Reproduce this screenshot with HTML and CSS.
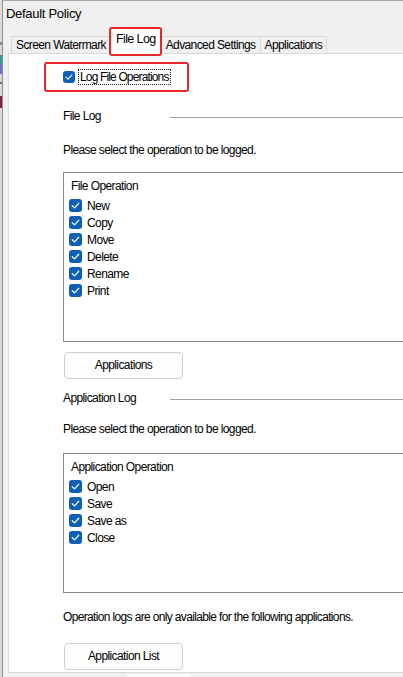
FILE: index.html
```html
<!DOCTYPE html>
<html>
<head>
<meta charset="utf-8">
<title>Default Policy</title>
<link rel="stylesheet" href="styles.css">
</head>
<body>
<div class="screen">
  <div class="behind"></div>
  <div class="window">
    <div class="title">Default Policy</div>
    <div class="tabs">
      <div class="tab">Screen Watermark</div>
      <div class="tab selected">File Log</div>
      <div class="tab">Advanced Settings</div>
      <div class="tab">Applications</div>
    </div>
    <div class="panel">
      <div class="checkrow highlighted">
        <span class="box small"><svg viewBox="0 0 12 12"><path d="M3 6.2 L5.1 8.2 L9 3.9" /></svg></span>
        <span class="focus">Log File Operations</span>
      </div>

      <div class="group g1">
        <span class="group-label">File Log</span>
        <span class="group-line"></span>
      </div>
      <div class="text t1">Please select the operation to be logged.</div>

      <div class="listbox lb1">
        <div class="lb-head">File Operation</div>
        <div class="item"><span class="box"><svg viewBox="0 0 12 12"><path d="M3 6.2 L5.1 8.2 L9 3.9" /></svg></span>New</div>
        <div class="item"><span class="box"><svg viewBox="0 0 12 12"><path d="M3 6.2 L5.1 8.2 L9 3.9" /></svg></span>Copy</div>
        <div class="item"><span class="box"><svg viewBox="0 0 12 12"><path d="M3 6.2 L5.1 8.2 L9 3.9" /></svg></span>Move</div>
        <div class="item"><span class="box"><svg viewBox="0 0 12 12"><path d="M3 6.2 L5.1 8.2 L9 3.9" /></svg></span>Delete</div>
        <div class="item"><span class="box"><svg viewBox="0 0 12 12"><path d="M3 6.2 L5.1 8.2 L9 3.9" /></svg></span>Rename</div>
        <div class="item"><span class="box"><svg viewBox="0 0 12 12"><path d="M3 6.2 L5.1 8.2 L9 3.9" /></svg></span>Print</div>
      </div>

      <div class="button b1">Applications</div>

      <div class="group g2">
        <span class="group-label">Application Log</span>
        <span class="group-line"></span>
      </div>
      <div class="text t2">Please select the operation to be logged.</div>

      <div class="listbox lb2">
        <div class="lb-head">Application Operation</div>
        <div class="item"><span class="box"><svg viewBox="0 0 12 12"><path d="M3 6.2 L5.1 8.2 L9 3.9" /></svg></span>Open</div>
        <div class="item"><span class="box"><svg viewBox="0 0 12 12"><path d="M3 6.2 L5.1 8.2 L9 3.9" /></svg></span>Save</div>
        <div class="item"><span class="box"><svg viewBox="0 0 12 12"><path d="M3 6.2 L5.1 8.2 L9 3.9" /></svg></span>Save as</div>
        <div class="item"><span class="box"><svg viewBox="0 0 12 12"><path d="M3 6.2 L5.1 8.2 L9 3.9" /></svg></span>Close</div>
      </div>

      <div class="text t3">Operation logs are only available for the following applications.</div>

      <div class="button b2">Application List</div>
    </div>
    <div class="peek"></div>
  </div>
</div>
</body>
</html>
```

FILE: styles.css
```css
html, body {
  margin: 0;
  padding: 0;
}
body {
  width: 403px;
  height: 677px;
  overflow: hidden;
  background: #f0f0f0;
  font-family: "Liberation Sans", Arial, sans-serif;
  font-size: 12px;
  letter-spacing: -0.6px;
  color: #000;
}
.screen {
  display: flex;
  width: 403px;
  height: 677px;
  overflow: hidden;
}
.behind {
  flex: 0 0 2px;
  background: linear-gradient(to bottom,
    #dcdcdc 0, #dcdcdc 42px,
    #8c8c8c 42px, #8c8c8c 45px,
    #d8d8d8 45px, #d8d8d8 55px,
    #2f9c9c 55px, #2f9c9c 64px,
    #6b73c9 64px, #6b73c9 74px,
    #d8d8d8 74px, #d8d8d8 82px,
    #707070 82px, #707070 84px,
    #d8d8d8 84px, #d8d8d8 96px,
    #8a1c3c 96px, #8a1c3c 108px,
    #d8d8d8 108px, #d8d8d8 100%);
}
.window {
  flex: 1 1 auto;
  min-width: 0;
  border-left: 1px solid #8f8f8f;
  border-top: 1px solid #a8a8a8;
  display: flex;
  flex-direction: column;
}
.title {
  height: 27px;
  line-height: 26px;
  padding-left: 3px;
  font-size: 13px;
  letter-spacing: -0.3px;
}
.tabs {
  display: flex;
  align-items: flex-end;
  height: 25px;
  padding-left: 8px;
  position: relative;
  z-index: 2;
}
.tab {
  height: 16px;
  line-height: 16px;
  padding: 0 4px;
  background: #f0f0f0;
  border: 1px solid #d9d9d9;
  border-bottom: none;
  white-space: nowrap;
}
.tab + .tab {
  margin-left: -1px;
}
.tab.selected {
  position: relative;
  height: 26px;
  line-height: 22px;
  margin-bottom: -1px;
  background: #fff;
  padding: 0 5px;
  font-size: 12.5px;
}
.tab.selected::after {
  content: "";
  position: absolute;
  left: -2px;
  right: -1px;
  top: -1px;
  bottom: -2px;
  border: 2px solid #e5262b;
  border-radius: 3px;
}
.panel {
  margin-left: 5px;
  background: #fff;
  border: 1px solid #d9d9d9;
  border-right: none;
  padding: 0 0 2px 54px;
  display: flex;
  flex-direction: column;
  align-items: flex-start;
  position: relative;
  z-index: 1;
}
.checkrow {
  display: inline-flex;
  align-items: center;
  height: 16px;
  margin-top: 15px;
  position: relative;
}
.checkrow.highlighted::after {
  content: "";
  position: absolute;
  left: -19px;
  right: -18px;
  top: -7px;
  bottom: -7px;
  border: 2px solid #e5262b;
  border-radius: 3px;
}
.box {
  flex: 0 0 13px;
  width: 13px;
  height: 13px;
  border-radius: 3px;
  background: #0e5fb8;
  display: inline-flex;
}
.box.small {
  flex-basis: 12px;
  width: 12px;
  height: 12px;
}
.box svg {
  width: 100%;
  height: 100%;
}
.box path {
  fill: none;
  stroke: #fff;
  stroke-width: 1.1;
  stroke-linecap: round;
  stroke-linejoin: round;
}
.focus {
  margin-left: 3px;
  padding: 0 1px;
  line-height: 14px;
  border: 1px dotted #222;
  letter-spacing: -0.85px;
}
.group {
  display: flex;
  align-items: center;
  align-self: stretch;
  height: 16px;
}
.g1 { margin-top: 23px; }
.g2 { margin-top: 11px; }
.group-label {
  flex: 0 0 107px;
  line-height: 16px;
}
.group-line {
  flex: 1 1 auto;
  height: 1px;
  background: #a0a0a0;
  margin-top: 2px;
}
.text {
  line-height: 16px;
  white-space: nowrap;
}
.t1 { margin-top: 18px; }
.t2 { margin-top: 15px; }
.t3 { margin-top: 16px; letter-spacing: -0.65px; }
.listbox {
  align-self: stretch;
  box-sizing: border-box;
  border: 1px solid #8a8a96;
  border-right: none;
  padding: 5px 0 0 5px;
}
.lb1 { margin-top: 14px; height: 170px; }
.lb2 { margin-top: 16px; height: 140px; }
.lb-head {
  line-height: 16px;
  padding-left: 2px;
  margin-bottom: 3px;
}
.item {
  display: flex;
  align-items: center;
  gap: 5px;
  height: 17px;
}
.button {
  box-sizing: border-box;
  width: 119px;
  margin-left: 1px;
  border: 1px solid #cfcfcf;
  border-radius: 4px;
  background: #fdfdfd;
  text-align: center;
  line-height: 25px;
}
.b1 { margin-top: 10px; height: 27px; }
.b2 { margin-top: 18px; height: 27px; }
.peek {
  width: 64px;
  height: 3px;
  margin: 1px 0 0 124px;
  background: #fafafa;
}
```
